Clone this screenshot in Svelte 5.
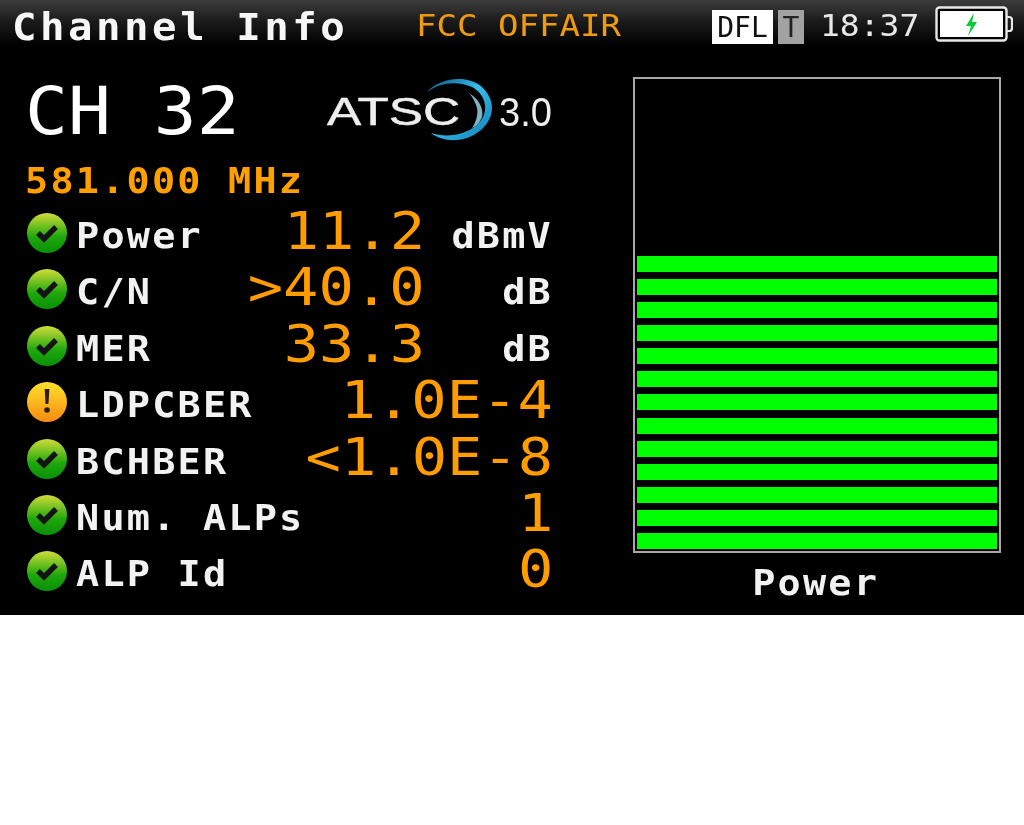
<script>
  const rows = [
    { label: 'Power', value: '11.2', unit: 'dBmV', ok: true },
    { label: 'C/N', value: '>40.0', unit: 'dB', ok: true },
    { label: 'MER', value: '33.3', unit: 'dB', ok: true },
    { label: 'LDPCBER', value: '1.0E-4', unit: '', ok: false },
    { label: 'BCHBER', value: '<1.0E-8', unit: '', ok: true },
    { label: 'Num. ALPs', value: '1', unit: '', ok: true },
    { label: 'ALP Id', value: '0', unit: '', ok: true }
  ];
  const bars = Array.from({ length: 13 }, (_, i) => i);
</script>

<div class="screen">
  <header class="top">
    <span class="title">Channel Info</span>
    <span class="mode">FCC OFFAIR</span>
    <span class="badge dfl"><span>DFL</span></span>
    <span class="badge tee"><span>T</span></span>
    <span class="time">18:37</span>
    <svg class="battery" width="78" height="36" viewBox="0 0 78 36">
      <rect x="1.5" y="1.5" width="70" height="33" rx="3" fill="#000" stroke="#e8e8e8" stroke-width="2.4" />
      <rect x="5" y="5" width="63" height="26" fill="#fff" />
      <path d="M72 11h2q3 0 3 3v8q0 3-3 3h-2" fill="none" stroke="#e8e8e8" stroke-width="2.2" />
      <path d="M39 7 L31 20 H36 L33 30 L42 16 H37 Z" fill="#0c3" />
    </svg>
  </header>

  <main class="body">
    <section class="left">
      <div class="headline">
        <span class="channel">CH 32</span>
        <svg class="logo" width="226" height="70" viewBox="0 0 226 70">
          <defs>
            <linearGradient id="arc" x1="0" y1="0" x2="1" y2="1">
              <stop offset="0" stop-color="#0a4f78" />
              <stop offset="0.45" stop-color="#35bdec" />
              <stop offset="1" stop-color="#0f7fb5" />
            </linearGradient>
          </defs>
          <path d="M100 17 C112 3 140 -1 155 12 C170 26 168 46 150 58 C135 68 115 67 104 58 C120 63 138 60 150 50 C163 38 160 20 145 12 C130 5 112 8 100 17 Z" fill="url(#arc)" />
          <path d="M142 18 C152 24 157 34 155 42 C153 47 150 51 145 53 C150 46 152 36 149 30 C147 25 145 21 142 18 Z" fill="#9fe0f5" opacity="0.8" />
          <text class="atsc" x="0" y="50" textLength="133" lengthAdjust="spacingAndGlyphs">ATSC</text>
          <text class="three" x="172" y="51" textLength="53" lengthAdjust="spacingAndGlyphs">3.0</text>
        </svg>
      </div>
      <div class="freq">581.000 MHz</div>
      <ul class="rows">
        {#each rows as r}
          <li class="row">
            <svg class="status" width="42" height="42" viewBox="0 0 42 42">
              <defs>
                <linearGradient id="g-ok" x1="0" y1="0" x2="0" y2="1">
                  <stop offset="0" stop-color="#d2dc3a" />
                  <stop offset="0.6" stop-color="#1ea80c" />
                  <stop offset="1" stop-color="#0a8f06" />
                </linearGradient>
                <linearGradient id="g-warn" x1="0" y1="0" x2="0" y2="1">
                  <stop offset="0" stop-color="#ffe22c" />
                  <stop offset="1" stop-color="#f78a10" />
                </linearGradient>
              </defs>
              <circle cx="21" cy="21" r="20" fill={r.ok ? 'url(#g-ok)' : 'url(#g-warn)'} />
              {#if r.ok}
                <path d="M12 21 L18 27 L30 15" fill="none" stroke="#141414" stroke-width="5.4" />
              {:else}
                <path d="M18.6 8h4.8l-1 15h-2.8z" fill="#2e1d00" />
                <circle cx="21" cy="29" r="2.8" fill="#2e1d00" />
              {/if}
            </svg>
            <span class="label">{r.label}</span>
            <span class="value">{r.value}</span>
            {#if r.unit}<span class="unit">{r.unit}</span>{/if}
          </li>
        {/each}
      </ul>
    </section>

    <section class="right">
      <div class="meter">
        {#each bars as b (b)}<div class="bar"></div>{/each}
      </div>
      <div class="caption"><span>Power</span></div>
    </section>
  </main>
</div>

<style>
  :global(body) {
    margin: 0;
    background: #fff;
  }
  .screen {
    width: 1024px;
    height: 615px;
    background: #000;
    font-family: "DejaVu Sans Mono", monospace;
    overflow: hidden;
    filter: blur(0.6px);
  }
  .top {
    height: 50px;
    display: flex;
    align-items: center;
    background: linear-gradient(#3c3c3c 0, #1a1a1a 22px, #000 46px);
  }
  .title, .mode, .time, .channel, .freq, .label, .badge span, .caption span {
    display: inline-block;
    transform-origin: left center;
  }
  .title {
    margin-left: 12px;
    width: 404px;
    flex: none;
    font-weight: 700;
    font-size: 37px;
    letter-spacing: 3.2px;
    color: #f6f6f6;
    line-height: 50px;
    margin-top: 6px;
    transform: scaleX(1.1);
  }
  .mode {
    width: 296px;
    flex: none;
    font-size: 30px;
    color: #ef9a10;
    line-height: 50px;
    white-space: pre;
    margin-top: 2px;
    transform: scaleX(1.135);
  }
  .badge {
    height: 34px;
    line-height: 35px;
    font-size: 28px;
    text-align: center;
    margin-top: 4px;
    flex: none;
  }
  .badge span {
    transform-origin: center;
  }
  .dfl {
    width: 61px;
    background: #fff;
    color: #111;
  }
  .tee {
    width: 26px;
    margin-left: 5px;
    background: #a2a2a2;
    color: #222;
  }
  .time {
    margin-left: 16px;
    width: 115px;
    flex: none;
    font-size: 30px;
    color: #e8e8e8;
    line-height: 50px;
    margin-top: 2px;
    transform: scaleX(1.1);
  }
  .battery {
    margin-top: -2px;
    flex: none;
  }
  .body {
    display: flex;
    height: 565px;
  }
  .left {
    width: 528px;
    margin-left: 25px;
    flex: none;
  }
  .headline {
    display: flex;
    justify-content: space-between;
    align-items: center;
    height: 82px;
    margin-top: 18px;
  }
  .channel {
    font-size: 66px;
    color: #fff;
    line-height: 82px;
    margin-top: 5px;
    transform: scaleX(1.08);
  }
  .logo {
    margin-top: 2px;
    flex: none;
    overflow: visible;
  }
  .atsc {
    font-family: "Liberation Sans", sans-serif;
    font-size: 39px;
    fill: #eee;
    stroke: #eee;
    stroke-width: 0.5px;
  }
  .three {
    font-family: "Liberation Sans", sans-serif;
    font-size: 41px;
    fill: #eee;
  }
  .freq {
    font-weight: 700;
    font-size: 35px;
    letter-spacing: 2px;
    color: #ffa000;
    line-height: 38px;
    margin-top: 12px;
    transform: scaleX(1.1);
  }
  .rows {
    list-style: none;
    margin: 2px 0 0;
    padding: 0;
  }
  .row {
    height: 56.4px;
    display: flex;
    align-items: baseline;
    position: relative;
  }
  .status {
    position: absolute;
    left: 1px;
    top: 10px;
  }
  .label {
    margin-left: 51px;
    font-weight: 700;
    font-size: 35px;
    letter-spacing: 2px;
    color: #f2f2f2;
    line-height: 56px;
    transform: scaleX(1.1);
  }
  .value {
    margin-left: auto;
    font-size: 52px;
    color: #ff9c00;
    line-height: 56px;
    transform-origin: right center;
    transform: translateY(1px) scaleX(1.13);
  }
  .unit {
    width: 128px;
    text-align: right;
    font-weight: 700;
    font-size: 35px;
    letter-spacing: 2px;
    color: #f2f2f2;
    line-height: 56px;
    transform-origin: right center;
    transform: scaleX(1.1);
  }
  .right {
    margin-left: 80px;
    width: 368px;
    flex: none;
  }
  .meter {
    box-sizing: border-box;
    height: 476px;
    margin-top: 27px;
    border: 2px solid #a8a8a8;
    padding: 2px;
    display: flex;
    flex-direction: column;
    justify-content: flex-end;
    gap: 7.1px;
  }
  .bar {
    height: 16px;
    background: #00ff00;
  }
  .caption {
    text-align: center;
    font-weight: 700;
    font-size: 35px;
    letter-spacing: 2px;
    color: #f2f2f2;
    line-height: 58px;
    margin-top: 1px;
    margin-left: -2px;
  }
  .caption span {
    transform-origin: center;
    transform: scaleX(1.1);
  }
</style>
